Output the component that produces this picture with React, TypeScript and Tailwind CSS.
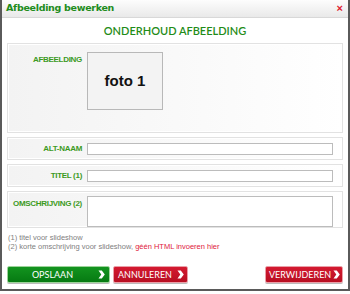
export default function App() {
    const label = "w-[74px] shrink-0 whitespace-nowrap text-right text-[8px] font-bold text-[#3c9a1e] tracking-[-0.3px]";
    const panel = "border border-[#e2e2e2] bg-gradient-to-r from-[#f3f3f3] to-[#ffffff] shadow-[inset_0_0_0_1px_#ffffff]";

    return (
        <div className="w-[350px] h-[294px] bg-white" style={{ fontFamily: "'Liberation Sans', Arial, sans-serif" }}>
            <div className="w-[350px] h-[291px] border-x-2 border-b-2 border-[#5a5a5a] flex flex-col">
                {/* Title bar */}
                <div className="h-[18px] shrink-0 flex items-center justify-between pl-[4px] pr-[5px] bg-gradient-to-b from-[#fdfdfd] to-[#e9e9e9] border-b border-[#d8d8d8]">
                    <span className="text-[9.5px] font-bold text-[#218c1c] tracking-[-0.3px]" style={{ fontFamily: "'DejaVu Sans', Verdana, sans-serif" }}>
                        Afbeelding bewerken
                    </span>
                    <span className="text-[11px] font-bold text-[#e0182e] leading-none">×</span>
                </div>

                {/* Heading */}
                <div className="h-[25px] pt-[1px] flex items-center justify-center text-[11px] text-[#1f8c18] font-semibold" style={{ fontFamily: "Lato, sans-serif" }}>
                    ONDERHOUD AFBEELDING
                </div>

                <div className="flex flex-col gap-[4px] px-[5px]">
                    {/* Image */}
                    <div className={`${panel} h-[90px] flex gap-[5px] pt-[8px]`}>
                        <div className={`${label} pt-[2px]`}>AFBEELDING</div>
                        <div className="w-[76px] h-[58px] border border-[#b8b8b8] bg-[#f3f3f3] flex items-center justify-center">
                            <span className="text-[15px] font-bold text-[#111]">foto 1</span>
                        </div>
                    </div>

                    {/* Alt-naam */}
                    <div className={`${panel} h-[23px] flex items-center gap-[5px] pr-[9px]`}>
                        <div className={label}>ALT-NAAM</div>
                        <div className="flex-1 h-[12px] border border-[#bcbcbc] bg-white" />
                    </div>

                    {/* Titel */}
                    <div className={`${panel} h-[23px] flex items-center gap-[5px] pr-[9px]`}>
                        <div className={label}>TITEL (1)</div>
                        <div className="flex-1 h-[12px] border border-[#bcbcbc] bg-white" />
                    </div>

                    {/* Omschrijving */}
                    <div className={`${panel} h-[37px] flex gap-[5px] pt-[4px] pr-[9px]`}>
                        <div className={`${label} pt-[2px]`}>OMSCHRIJVING (2)</div>
                        <div className="flex-1 h-[31px] border border-[#bcbcbc] bg-white" />
                    </div>
                </div>

                {/* Notes */}
                <div className="pl-[6px] pt-[5px] text-[7.5px] leading-[9px] text-[#808080]">
                    <div>(1) titel voor slideshow</div>
                    <div>
                        (2) korte omschrijving voor slideshow, <span className="text-[#e0203c]">géén HTML invoeren hier</span>
                    </div>
                </div>

                {/* Buttons */}
                <div className="flex items-center px-[5px] mt-[15px]" style={{ fontFamily: "Lato, sans-serif" }}>
                    <button className="w-[103px] h-[17px] flex items-center border border-[#9dd39a] rounded-[2px] bg-gradient-to-b from-[#13941f] to-[#067a12] text-white text-[9px] shadow-[0_1px_0_#bbb]">
                        <span className="flex-1 text-center pl-[4px]">OPSLAAN</span>
                        <span className="w-[16px] h-full flex items-center justify-center">
                            <Chevron />
                        </span>
                    </button>
                    <button className="ml-[3px] w-[75px] h-[17px] flex items-center border border-[#eaa0a8] rounded-[2px] bg-gradient-to-b from-[#d41a30] to-[#b80f22] text-white text-[9px] shadow-[0_1px_0_#bbb]">
                        <span className="flex-1 text-center pl-[3px]">ANNULEREN</span>
                        <span className="w-[14px] h-full flex items-center justify-center">
                            <Chevron />
                        </span>
                    </button>
                    <button className="ml-auto w-[78px] h-[17px] flex items-center border border-[#eaa0a8] rounded-[2px] bg-gradient-to-b from-[#d41a30] to-[#b80f22] text-white text-[9px] shadow-[0_1px_0_#bbb]">
                        <span className="flex-1 text-center pl-[3px]">VERWIJDEREN</span>
                        <span className="w-[14px] h-full flex items-center justify-center">
                            <Chevron />
                        </span>
                    </button>
                </div>
            </div>
        </div>
    );
}

function Chevron() {
    return (
        <svg width="7" height="9" viewBox="0 0 7 9">
            <path d="M0.5 0.5 L3.8 0.5 L6.8 4.5 L3.8 8.5 L0.5 8.5 L3.3 4.5 Z" fill="white" />
        </svg>
    );
}
